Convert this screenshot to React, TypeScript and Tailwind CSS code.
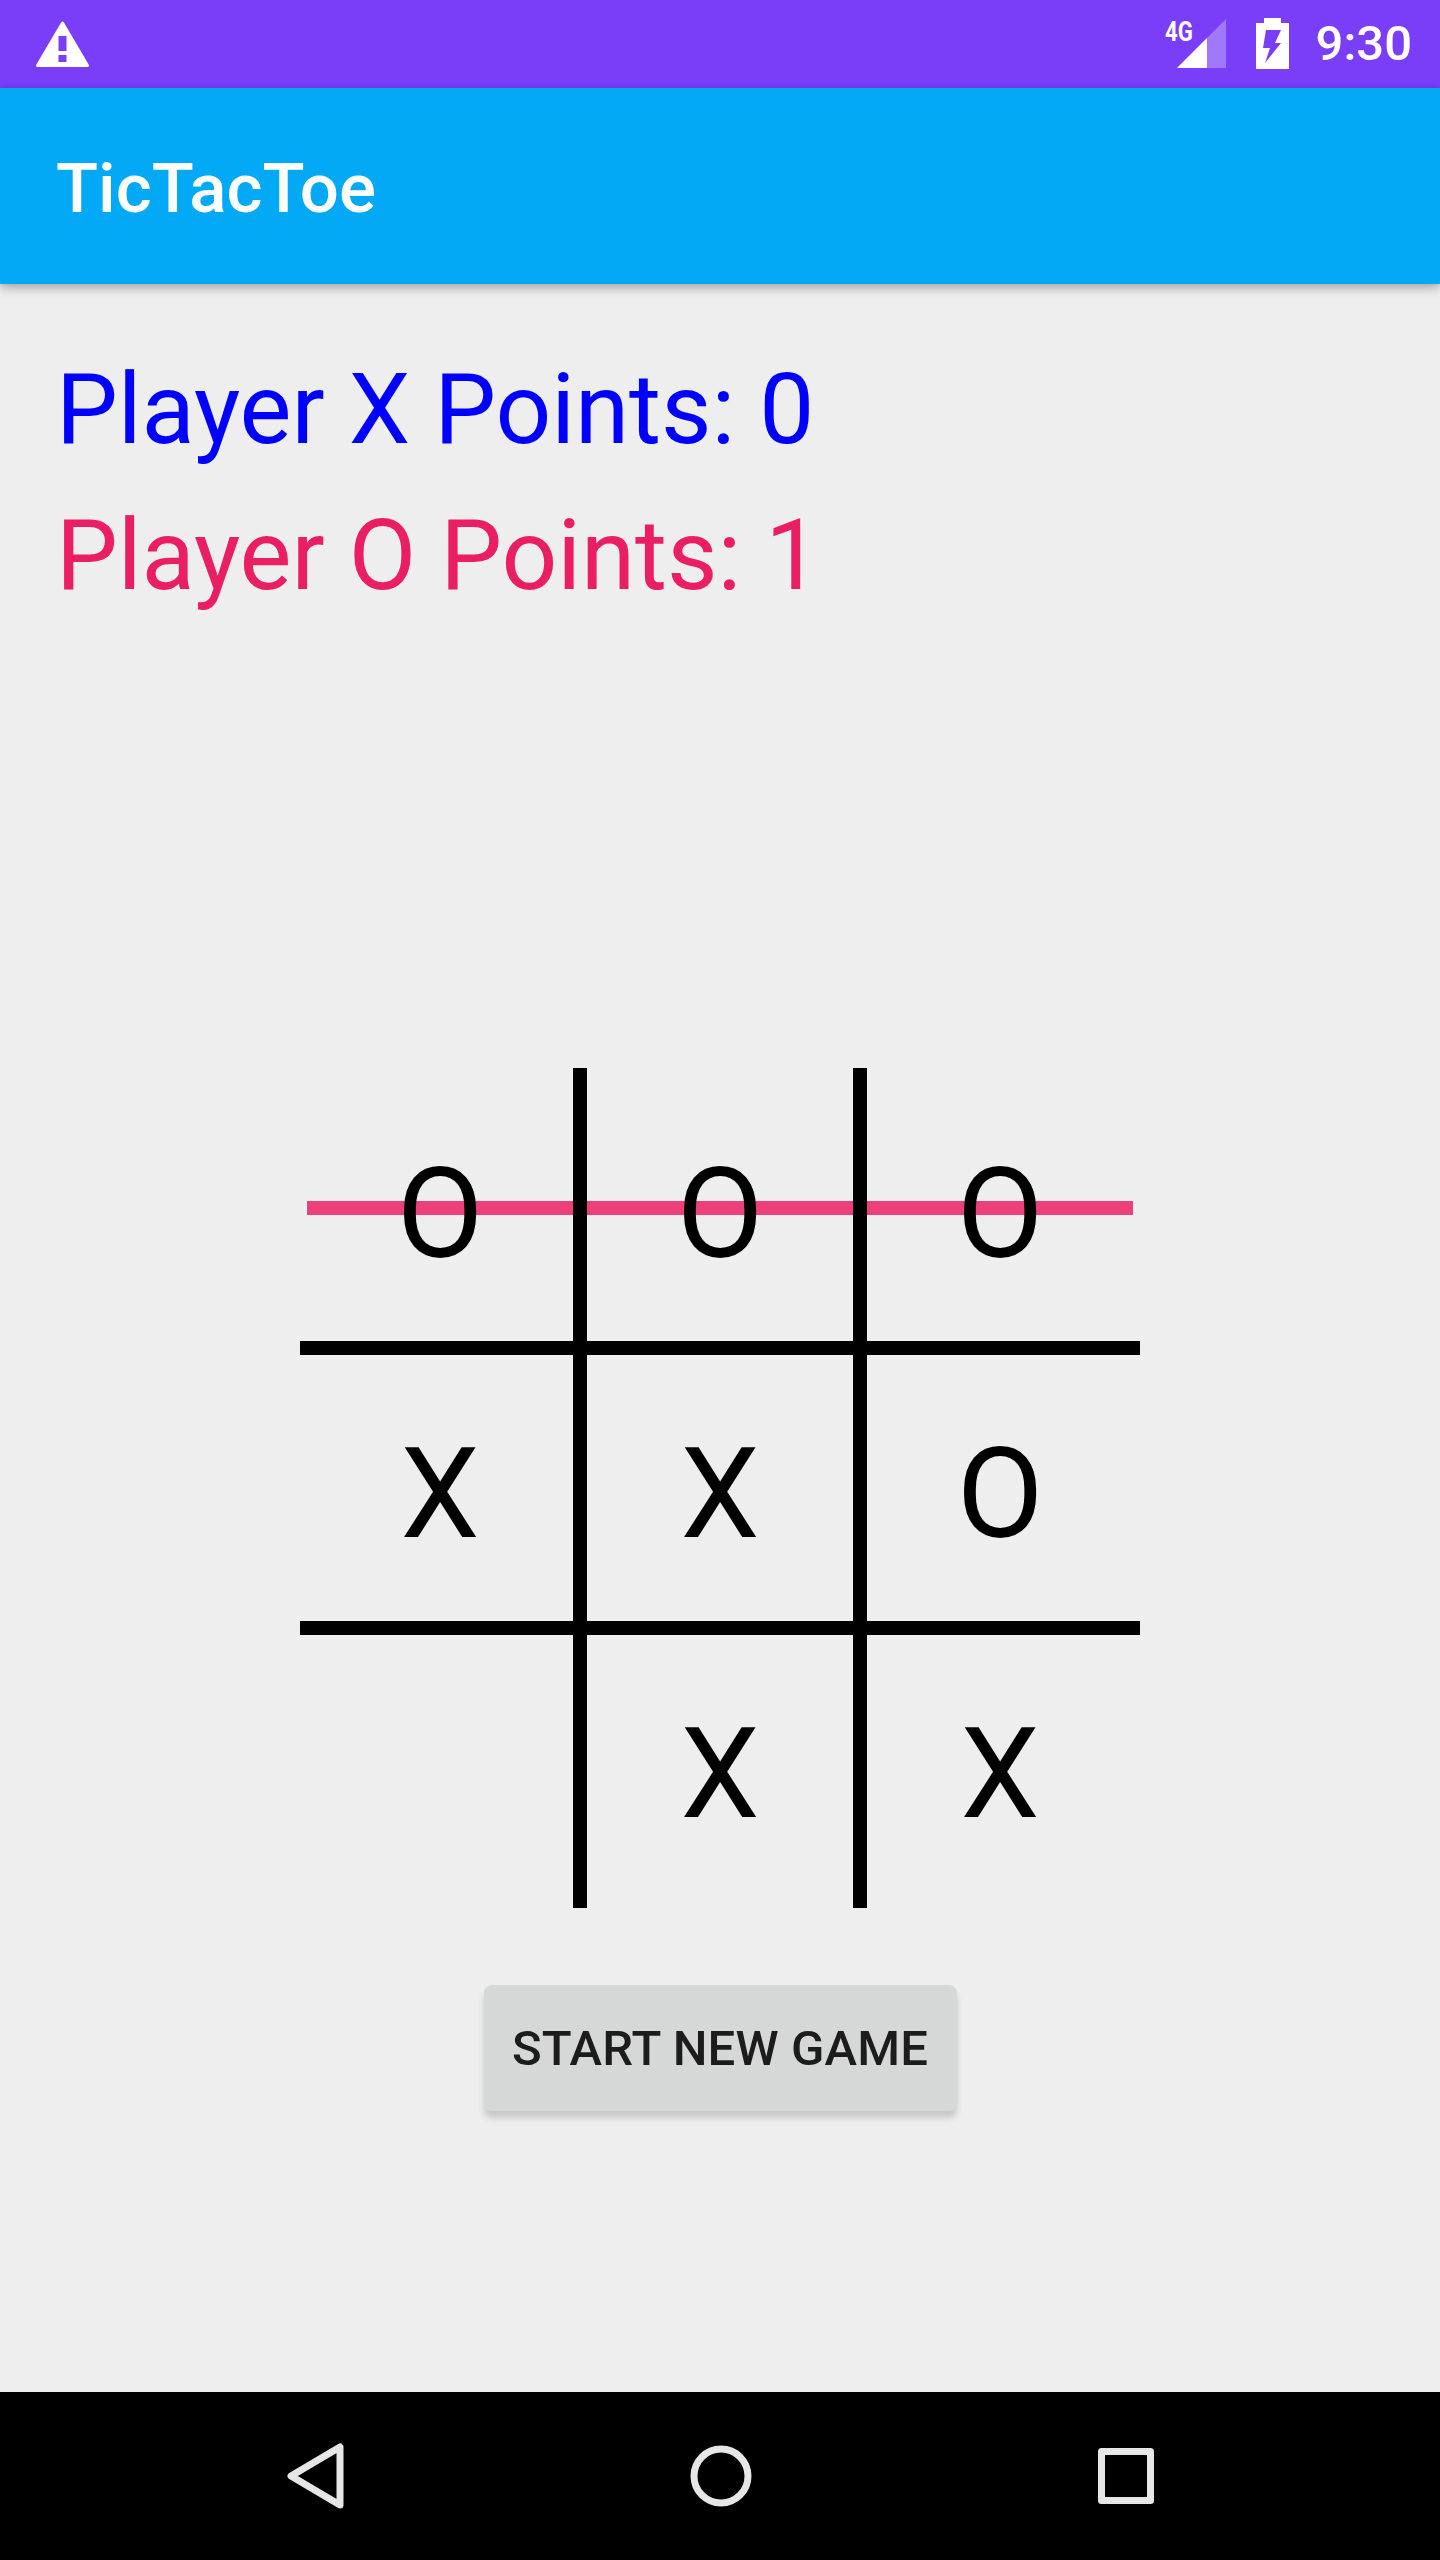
import React from 'react';

const board = [
  ['O', 'O', 'O'],
  ['X', 'X', 'O'],
  ['', 'X', 'X'],
];

const WarningIcon = () => (
  <svg width="60" height="50" viewBox="0 0 60 50" className="ml-[32px] mt-[-1px]">
    <path d="M30.5 4L55.5 46.5H5.5Z" fill="white" stroke="white" strokeWidth="3" strokeLinejoin="round" />
    <rect x="26.5" y="17" width="8" height="15" fill="#7a3ef9" />
    <rect x="26.5" y="36" width="8" height="7" fill="#7a3ef9" />
  </svg>
);

const SignalIcon = () => (
  <div className="relative w-[61px] h-[50px]">
    <svg width="49" height="49" viewBox="0 0 49 49" className="absolute left-[12px] top-0">
      <path d="M49 0V49H0Z" fill="white" fillOpacity="0.3" />
      <path d="M30 19V49H0Z" fill="white" />
    </svg>
    <span className="absolute left-0 top-[-3px] font-bold text-[27px] leading-[32px] text-white origin-left scale-x-[0.82]">4G</span>
  </div>
);

const BatteryIcon = () => (
  <svg width="33" height="51" viewBox="0 0 33 51" fill="white">
    <path fillRule="evenodd" d="M8 0H25V5H33V51H0V5H8ZM10 12H25L19 25H25L9 45L14 30H7Z" />
  </svg>
);

const Cell = ({ value, row, col }: { value: string; row: number; col: number }) => (
  <div className="relative flex items-center justify-center w-[280px] h-[280px] pt-[12px] text-[126px] leading-none text-black">
    {value}
    {col < 2 && <div className="absolute top-0 bottom-0 right-[-7px] w-[14px] bg-black" />}
    {row < 2 && <div className="absolute left-0 right-0 bottom-[-7px] h-[14px] bg-black" />}
  </div>
);

export default function App() {
  return (
    <div className="w-[1440px] h-[2560px] flex flex-col bg-[#eeeeee] font-['Roboto',sans-serif] overflow-hidden">
      {/* Status bar */}
      <div className="h-[88px] shrink-0 bg-[#7a3ef9] flex items-center justify-between">
        <WarningIcon />
        <div className="flex items-center mr-[28px]">
          <div className="mt-[-1px]"><SignalIcon /></div>
          <div className="ml-[30px] mt-[-1px]"><BatteryIcon /></div>
          <span className="ml-[27px] text-[49px] leading-[56px] font-medium text-white">9:30</span>
        </div>
      </div>

      {/* App bar */}
      <div className="h-[196px] shrink-0 bg-[#03a9f4] flex items-center px-[56px] pt-[5px] shadow-[0_3px_10px_rgba(0,0,0,0.35)] relative">
        <span className="text-[69px] font-medium text-white leading-none">TicTacToe</span>
      </div>

      {/* Content */}
      <div className="flex-1 flex flex-col px-[56px] pt-[68px]">
        <div className="text-[98px] leading-[115px] tracking-[-0.1px] text-[#0000ff]">Player X Points: 0</div>
        <div className="text-[98px] leading-[115px] tracking-[-0.1px] mt-[31px] text-[#e91e63]">Player O Points: 1</div>

        <div className="self-center mt-[455px] relative grid grid-cols-[280px_280px_280px]">
          <div className="absolute left-[7px] right-[7px] top-[133px] h-[14px] bg-[#ec407a]" />
          {board.map((cells, r) =>
            cells.map((v, c) => <Cell key={`${r}-${c}`} value={v} row={r} col={c} />)
          )}
        </div>

        <button className="self-center mt-[77px] w-[473px] h-[126px] pt-[2px] rounded-[8px] bg-[#d6d7d7] text-[#1c1c1c] text-[49px] tracking-[0.15px] font-medium uppercase shadow-[0_7px_6px_rgba(0,0,0,0.16)]">
          Start new game
        </button>
      </div>

      {/* Navigation bar */}
      <div className="h-[168px] shrink-0 bg-black flex items-center justify-center gap-[346px] text-[#e6e6e6]">
        <svg width="57" height="66" viewBox="0 0 57 66" fill="none" stroke="currentColor" strokeWidth="7" strokeLinejoin="round">
          <path d="M53 4V62L4 33Z" />
        </svg>
        <svg width="62" height="62" viewBox="0 0 62 62" fill="none" stroke="currentColor" strokeWidth="7">
          <circle cx="31" cy="31" r="27" />
        </svg>
        <svg width="56" height="56" viewBox="0 0 56 56" fill="none" stroke="currentColor" strokeWidth="7" strokeLinejoin="round">
          <rect x="3.5" y="3.5" width="49" height="49" />
        </svg>
      </div>
    </div>
  );
}
